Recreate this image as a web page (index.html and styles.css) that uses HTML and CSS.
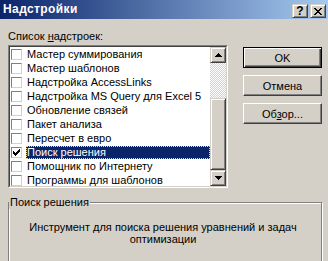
FILE: index.html
```html
<!DOCTYPE html>
<html lang="ru">
<head>
    <meta charset="UTF-8">
    <meta name="viewport" content="width=device-width, initial-scale=1.0">
    <title>Надстройки</title>
    <link rel="stylesheet" href="styles.css">
</head>
<body>
    <div class="dialog">
        <div class="titlebar">
            <span class="title">Надстройки</span>
            <div class="caption-buttons">
                <span class="cap-btn cap-help">?</span>
                <span class="cap-btn">
                    <svg width="8" height="7" viewBox="0 0 8 7" shape-rendering="crispEdges">
                        <path d="M0 0h2v1h1v1h2v-1h1v-1h2v1h-1v1h-1v1h-1v1h1v1h1v1h1v1h-2v-1h-1v-1h-2v1h-1v1h-2v-1h1v-1h1v-1h1v-1h-1v-1h-1v-1h-1z" fill="#000"/>
                    </svg>
                </span>
            </div>
        </div>

        <div class="content">
            <div class="top">
                <div class="left">
                    <div class="label">Список <u>н</u>адстроек:</div>
                    <div class="listbox">
                        <div class="list-inner">
                            <ul class="items">
                                <li class="item"><span class="check"></span><span class="item-text">Мастер суммирования</span></li>
                                <li class="item"><span class="check"></span><span class="item-text">Мастер шаблонов</span></li>
                                <li class="item"><span class="check"></span><span class="item-text">Надстройка AccessLinks</span></li>
                                <li class="item"><span class="check"></span><span class="item-text">Надстройка MS Query для Excel 5</span></li>
                                <li class="item"><span class="check"></span><span class="item-text">Обновление связей</span></li>
                                <li class="item"><span class="check"></span><span class="item-text">Пакет анализа</span></li>
                                <li class="item"><span class="check"></span><span class="item-text">Пересчет в евро</span></li>
                                <li class="item selected">
                                    <span class="check">
                                        <svg width="7" height="7" viewBox="0 0 7 7" shape-rendering="crispEdges">
                                            <rect x="0" y="2" width="1" height="3"/>
                                            <rect x="1" y="3" width="1" height="3"/>
                                            <rect x="2" y="4" width="1" height="3"/>
                                            <rect x="3" y="3" width="1" height="3"/>
                                            <rect x="4" y="2" width="1" height="3"/>
                                            <rect x="5" y="1" width="1" height="3"/>
                                            <rect x="6" y="0" width="1" height="3"/>
                                        </svg>
                                    </span>
                                    <span class="item-text">Поиск решения</span>
                                </li>
                                <li class="item"><span class="check"></span><span class="item-text">Помощник по Интернету</span></li>
                                <li class="item"><span class="check"></span><span class="item-text">Программы для шаблонов</span></li>
                            </ul>
                            <div class="scrollbar">
                                <div class="sb-btn">
                                    <svg width="7" height="4" viewBox="0 0 7 4" shape-rendering="crispEdges">
                                        <rect x="3" y="0" width="1" height="1"/>
                                        <rect x="2" y="1" width="3" height="1"/>
                                        <rect x="1" y="2" width="5" height="1"/>
                                        <rect x="0" y="3" width="7" height="1"/>
                                    </svg>
                                </div>
                                <div class="sb-track"></div>
                                <div class="sb-thumb"></div>
                                <div class="sb-btn">
                                    <svg width="7" height="4" viewBox="0 0 7 4" shape-rendering="crispEdges">
                                        <rect x="0" y="0" width="7" height="1"/>
                                        <rect x="1" y="1" width="5" height="1"/>
                                        <rect x="2" y="2" width="3" height="1"/>
                                        <rect x="3" y="3" width="1" height="1"/>
                                    </svg>
                                </div>
                            </div>
                        </div>
                    </div>
                </div>

                <div class="buttons">
                    <button class="btn btn-default">OK</button>
                    <button class="btn">Отмена</button>
                    <button class="btn">Об<u>з</u>ор...</button>
                </div>
            </div>

            <fieldset class="group">
                <legend>Поиск решения</legend>
                <div class="desc">Инструмент для поиска решения уравнений и задач оптимизации</div>
            </fieldset>
        </div>
    </div>
</body>
</html>
```

FILE: styles.css
```css
body {
    margin: 0;
    background-color: #d4d0c8;
    font-family: "Liberation Sans", Arial, sans-serif;
    font-size: 11px;
    color: #000;
}

.dialog {
    width: 328px;
    height: 261px;
    overflow: hidden;
    background-color: #d4d0c8;
}

/* заголовок окна */
.titlebar {
    height: 19px;
    display: flex;
    justify-content: space-between;
    align-items: flex-start;
    padding: 0 2px 0 3px;
    background: linear-gradient(to right, #0a246a, #a6caf0);
}

.title {
    color: #fff;
    font-weight: bold;
    font-size: 12px;
    letter-spacing: 0.4px;
    line-height: 19px;
}

.caption-buttons {
    display: flex;
    gap: 2px;
    margin-top: 4px;
}

.cap-btn {
    width: 16px;
    height: 14px;
    box-sizing: border-box;
    display: flex;
    align-items: center;
    justify-content: center;
    background-color: #d4d0c8;
    border: 1px solid;
    border-color: #d4d0c8 #404040 #404040 #d4d0c8;
    box-shadow: inset 1px 1px #fff, inset -1px -1px #808080;
}

.cap-help {
    font-weight: bold;
    font-size: 12px;
    line-height: 12px;
}

.content {
    padding: 11px 6px 0 8px;
}

.top {
    display: flex;
    gap: 15px;
}

.left {
    width: 220px;
}

.label {
    height: 13px;
    line-height: 13px;
    margin-bottom: 2px;
}

/* список надстроек */
.listbox {
    border: 1px solid;
    border-color: #808080 #fff #fff #808080;
}

.list-inner {
    height: 139px;
    display: flex;
    background-color: #fff;
    border: 1px solid;
    border-color: #404040 #d4d0c8 #d4d0c8 #404040;
}

.items {
    flex: 1;
    list-style: none;
    margin: 0;
    padding: 0;
    overflow: hidden;
}

.item {
    height: 14px;
    display: flex;
    align-items: center;
}

.check {
    width: 11px;
    height: 11px;
    box-sizing: border-box;
    flex-shrink: 0;
    margin: 0 4px 0 1px;
    padding: 1px;
    display: flex;
    background-color: #fff;
    border: 1px solid;
    border-color: #808080 #d4d0c8 #d4d0c8 #808080;
}

.item-text {
    flex: 1;
    height: 13px;
    box-sizing: border-box;
    line-height: 11px;
    white-space: nowrap;
    border: 1px solid transparent;
}

.item.selected .item-text {
    background-color: #0a246a;
    color: #fff;
    border: 1px dotted #f5db95;
}

.scrollbar {
    width: 16px;
    display: flex;
    flex-direction: column;
}

.sb-btn,
.sb-thumb {
    box-sizing: border-box;
    background-color: #d4d0c8;
    border: 1px solid;
    border-color: #d4d0c8 #404040 #404040 #d4d0c8;
    box-shadow: inset 1px 1px #fff, inset -1px -1px #808080;
}

.sb-btn {
    height: 16px;
    display: flex;
    align-items: center;
    justify-content: center;
}

.sb-track {
    height: 35px;
    background: repeating-conic-gradient(#fff 0 25%, #d4d0c8 0 50%) 0 0 / 2px 2px;
}

.sb-thumb {
    flex: 1;
}

/* кнопки справа */
.buttons {
    display: flex;
    flex-direction: column;
    gap: 7px;
    padding-top: 17px;
}

.btn {
    width: 79px;
    height: 21px;
    padding: 0;
    font: inherit;
    color: #000;
    background-color: #d4d0c8;
    border: 1px solid;
    border-color: #fff #404040 #404040 #fff;
    box-shadow: inset -1px -1px #808080;
}

.btn-default {
    border: 1px solid #000;
    box-shadow: inset 1px 1px #fff, inset -1px -1px #404040, inset -2px -2px #808080;
}

/* группа с описанием */
.group {
    width: 314px;
    height: 68px;
    box-sizing: border-box;
    margin: 8px 0 0 0;
    padding: 0 8px 0 4px;
    border: 1px solid #808080;
    box-shadow: inset 1px 1px #fff, 1px 1px #fff;
}

.group legend {
    padding: 0 1px;
    margin-left: -4px;
    line-height: 13px;
    background-color: #d4d0c8;
}

.desc {
    padding-top: 12px;
    text-align: center;
    line-height: 12px;
}
```
